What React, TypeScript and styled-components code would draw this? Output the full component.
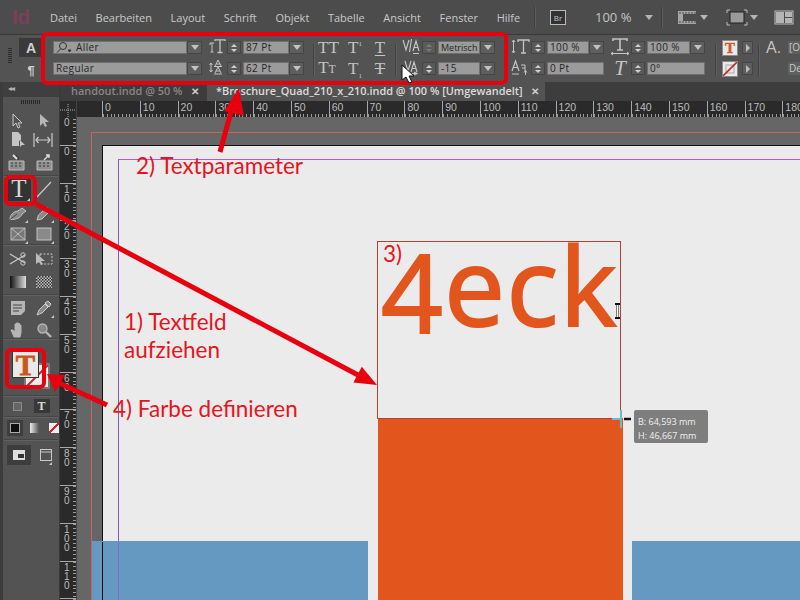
import React from 'react';
import styled, { createGlobalStyle } from 'styled-components';

const Global = createGlobalStyle`
  html, body { margin: 0; padding: 0; width: 800px; height: 600px; overflow: hidden; background: #535353; }
  * { box-sizing: border-box; }
`;

const Screen = styled.div`
  position: relative; width: 800px; height: 600px; overflow: hidden;
  display: flex; flex-direction: column;
  font-family: "Open Sans", sans-serif; background: #4f4f4f;
`;

/* ---------- menu bar ---------- */
const MenuBar = styled.div`
  height: 34px; flex: none; display: flex; align-items: center; background: #4c4c4c; color: #c9c9c9;
  font-size: 11px; overflow: hidden;
`;
const Logo = styled.div`
  width: 50px; padding-left: 12px; font-family: "Liberation Sans", sans-serif; font-weight: 700; font-size: 21px;
  color: #7b3f58; letter-spacing: -0.5px;
`;
const MenuItems = styled.div`display: flex; gap: 18.6px; width: 484px;`;
const MenuItem = styled.span`white-space: nowrap;`;
const MenuDivider = styled.div<{ $ml?: number }>`
  width: 1px; height: 20px; background: #3d3d3d; box-shadow: 1px 0 0 #5e5e5e; flex: none; margin-left: ${p => p.$ml ?? 0}px;
`;
const BrBox = styled.div`
  width: 16px; height: 15px; margin-left: 15px; border: 1px solid #bbb; background: #333; color: #c8c8c8;
  font-size: 8px; display: flex; align-items: center; justify-content: center; flex: none;
`;
const Zoom = styled.div`width: 50px; margin-left: 29px; font-size: 13px; color: #c4c4c4; flex: none; white-space: nowrap;`;
const Caret = styled.div<{ $ml?: number }>`
  width: 0; height: 0; flex: none; margin-left: ${p => p.$ml ?? 2}px;
  border-left: 4px solid transparent; border-right: 4px solid transparent; border-top: 5px solid #b5b5b5;
`;
const MenuIcon = styled.svg<{ $ml: number }>`flex: none; margin-left: ${p => p.$ml}px; color: #bdbdbd;`;

/* ---------- control bar ---------- */
const ControlBar = styled.div`
  height: 48px; flex: none; display: flex; background: #535353; padding-top: 5px;
  border-top: 1px solid #393939; overflow: hidden;
`;
const Grip = styled.div`
  margin: 8px 0 0 8px; width: 4px; height: 15px; flex: none;
  background: repeating-linear-gradient(180deg, #2e2e2e 0 1px, transparent 1px 2px);
`;
const Col = styled.div<{ $ml: number; $w: number }>`
  margin-left: ${p => p.$ml}px; width: ${p => p.$w}px; flex: none; display: flex; flex-direction: column; gap: 6px;
`;
const Row = styled.div`height: 15px; display: flex; align-items: center; gap: 1px;`;
const VDivider = styled.div<{ $ml: number }>`
  margin: 4px 0 0 ${p => p.$ml}px; width: 1px; height: 32px; background: #424242; flex: none; box-shadow: 1px 0 0 #5f5f5f;
`;
const ModeBtn = styled.div<{ $on?: boolean }>`
  width: 24px; height: 19px; display: flex; align-items: center; justify-content: center; margin-top: -2px;
  font-family: "Liberation Sans", sans-serif; font-weight: 700; color: #d0d0d0; font-size: ${p => p.$on ? 14 : 13}px;
  background: ${p => p.$on ? '#3a3a3a' : 'transparent'};
`;
const Field = styled.div<{ $narrow?: boolean }>`
  flex: 1; min-width: 0; height: 13px; background: #9b9b9b; box-shadow: inset 0 0 0 1px #6f6f6f; color: #262626;
  font-size: ${p => p.$narrow ? 9 : 10}px; letter-spacing: ${p => p.$narrow ? 0 : 0.4}px; line-height: 13px; padding-left: 3px; display: flex; align-items: center; gap: 4px;
  white-space: nowrap; overflow: hidden;
`;
const Drop = styled.div`
  width: 15px; height: 13px; flex: none; background: #5e5e5e; display: flex; align-items: center; justify-content: center;
  margin-left: -1px; box-shadow: inset 0 0 0 1px #454545;
`;
const DropArrow = styled.div`
  width: 0; height: 0; border-left: 4px solid transparent; border-right: 4px solid transparent; border-top: 5px solid #c2c2c2;
`;
const SpinnerBox = styled.div<{ $dim?: boolean }>`
  width: 14px; height: 13px; flex: none; background: #5a5a5a; margin-right: 1px; display: flex; flex-direction: column;
  align-items: center; justify-content: center; gap: 2px; box-shadow: inset 0 0 0 1px #454545;
  --c: ${p => p.$dim ? '#7a7a7a' : '#cfcfcf'};
`;
const Up = styled.div`width:0;height:0;border-left:3px solid transparent;border-right:3px solid transparent;border-bottom:3px solid var(--c);`;
const Down = styled.div`width:0;height:0;border-left:3px solid transparent;border-right:3px solid transparent;border-top:3px solid var(--c);`;
const Glyph = styled.div<{ $w?: number; $size?: number; $italic?: boolean }>`
  width: ${p => p.$w ?? 18}px; flex: none; text-align: center; color: #c4c4c4; line-height: 15px;
  font-family: "Liberation Serif", serif; font-size: ${p => p.$size ?? 17}px; white-space: nowrap;
  font-style: ${p => p.$italic ? 'italic' : 'normal'};
`;
const Sup = styled.span`font-size: 7px; vertical-align: super; line-height: 0;`;
const Sub = styled.span`font-size: 7px; vertical-align: sub; line-height: 0;`;
const SmallCap = styled.span`font-size: 12px;`;
const Under = styled.span`text-decoration: underline; text-underline-offset: 2px;`;
const Strike = styled.span`text-decoration: line-through;`;
const CaseRow = styled.div`height: 15px; display: flex; align-items: center; gap: 10px;`;
const ColorChip = styled.div`
  width: 16px; height: 16px; flex: none; background: #e9e9e9; border: 1px solid #8a8a8a;
  display: flex; align-items: center; justify-content: center; color: #d9541e;
  font-family: "Liberation Serif", serif; font-weight: 700; font-size: 15px; line-height: 14px;
  margin-right: 3px; -webkit-text-stroke: 0.4px #d9541e;
`;
const ArrowBtn = styled.div`
  width: 11px; height: 13px; flex: none; background: #5e5e5e; display: flex; align-items: center; justify-content: center;
  box-shadow: inset 0 0 0 1px #454545;
`;
const RightTri = styled.div`
  width:0;height:0;border-top:4px solid transparent;border-bottom:4px solid transparent;border-left:4px solid #bdbdbd;
`;
const StyleA = styled.div`
  font-family: "Liberation Sans", sans-serif; font-size: 16px; color: #c2c2c2; width: 21px; flex: none; line-height: 15px;
`;
const StubField = styled.div`
  width: 16px; height: 13px; flex: none; background: #5f5f5f; color: #c8c8c8; font-size: 10px; line-height: 13px; padding-left: 1px; white-space: nowrap;
`;

/* ---------- lower part ---------- */
const Lower = styled.div`flex: 1; display: flex; min-height: 0;`;
const Toolbox = styled.div`
  width: 60px; flex: none; background: #535353; border-left: 3px solid #3c3c3c; border-right: 1px solid #3a3a3a;
  display: flex; flex-direction: column; align-items: stretch;
`;
const ToolHead = styled.div`
  height: 15px; flex: none; background: #3f3f3f; color: #b5b5b5; font-size: 8px; line-height: 14px; padding-left: 5px; letter-spacing: -1px;
  font-family: "DejaVu Sans", sans-serif;
`;
const ToolGrip = styled.div`
  height: 4px; width: 20px; margin: 3px auto 7px; flex: none;
  background: repeating-linear-gradient(90deg, #272727 0 1px, transparent 1px 2px);
`;
const ToolRow = styled.div<{ $h: number; $pb?: number }>`
  height: ${p => p.$h}px; padding: 0 4px ${p => p.$pb ?? 0}px 4px; display: flex; align-items: center; justify-content: space-between; flex: none;
`;
const ToolSep = styled.div`height: 1px; background: #454545; box-shadow: 0 1px 0 #626262; flex: none; margin: 0 1px;`;
const Tool = styled.div<{ $w?: number }>`
  width: ${p => p.$w ?? 22}px; height: 20px; flex: none; display: flex; align-items: center; justify-content: center;
  color: #c9c9c9; font-family: "Liberation Serif", serif; position: relative;
`;
const Fly = styled.div`
  position: absolute; right: 1px; bottom: 0; width: 0; height: 0;
  border-left: 3px solid transparent; border-bottom: 3px solid #c9c9c9;
`;
const TypeTool = styled(Tool)`background: #333; font-size: 25px; line-height: 22px; color: #d8d8d8; height: 23px; width: 24px;`;
const FillStack = styled.div`position: relative; height: 56px; flex: none;`;
const StrokeSwatch = styled.div`
  position: absolute; left: 21px; top: 24px; width: 26px; height: 26px; background: #eeeeee; border: 2px solid #7a7a7a;
  overflow: hidden;
`;
const FillSwatch = styled.div`
  position: absolute; left: 9px; top: 12px; width: 27px; height: 27px; background: #e9e9e9; border: 1px solid #333;
  color: #c9581f; font-family: "Liberation Serif", serif; font-weight: 700; font-size: 29px; line-height: 26px; text-align: center;
  -webkit-text-stroke: 0.8px #c9581f;
`;
const SmallRow = styled.div`height: 20px; flex: none; display: flex; align-items: center; justify-content: center; gap: 12px;`;
const HollowBtn = styled.div`width: 9px; height: 9px; border: 1px solid #8a8a8a; background: #666;`;
const TextBtn = styled.div`
  width: 16px; height: 14px; background: #383838; color: #ddd; text-align: center; line-height: 14px; font-size: 12px;
  font-family: "Liberation Serif", serif; font-weight: 700;
`;
const ColorRow = styled.div`height: 22px; flex: none; display: flex; align-items: center; gap: 7px; padding-left: 7px;`;
const BlackBtn = styled.div`width: 10px; height: 10px; background: #0e0e0e; border: 1px solid #aaa; outline: 3px solid #3e3e3e;`;
const GradBtn = styled.div`width: 9px; height: 10px; margin-left: 3px; background: linear-gradient(90deg, #eee, #555);`;
const NoneBtn = styled.div`
  width: 10px; height: 10px; margin-left: 3px; background: linear-gradient(135deg, #eee 42%, #c9262c 42% 58%, #eee 58%);
`;
const ViewRow = styled.div`height: 29px; flex: none; display: flex; align-items: center; gap: 8px; padding-left: 4px;`;
const ViewBtn = styled.div`width: 24px; height: 20px; background: #3d3d3d; display: flex; align-items: center; justify-content: center; color: #d5d5d5;`;

const Main = styled.div`flex: 1; min-width: 0; display: flex; flex-direction: column;`;
const TabBar = styled.div`height: 19px; flex: none; display: flex; background: #3d3d3d; font-size: 10.9px; line-height: 18px;`;
const DimTab = styled.div`
  width: 147px; padding-left: 11px; color: #888; display: flex; font-weight: 600; white-space: nowrap; flex: none;
`;
const ActiveTab = styled.div`
  width: 338px; padding-left: 9px; color: #dcdcdc; background: #535353; display: flex; font-weight: 600; white-space: nowrap; flex: none;
`;
const TabClose = styled.span<{ $ml: number }>`margin-left: ${p => p.$ml}px; color: #cfcfcf; font-size: 10px;`;

const RulerTop = styled.div`height: 16px; flex: none; display: flex; background: #2a2a2a;`;
const Corner = styled.div`width: 17px; flex: none; color: #a5a5a5; border-right: 1px solid #444;`;
const HRuler = styled.div`flex: 1; overflow: hidden; display: flex; padding-left: 25px; min-width: 0;`;
const HCell = styled.div`
  width: 37.8px; flex: none; height: 16px; border-left: 1px solid #a8a8a8; padding-left: 2px;
  font-size: 10.5px; line-height: 12px; color: #bdbdbd; font-family: "Liberation Sans", sans-serif;
  background: repeating-linear-gradient(90deg, #9a9a9a 0 1px, transparent 1px 3.78px) left bottom / 100% 3px no-repeat;
`;
const Body = styled.div`flex: 1; min-height: 0; display: flex;`;
const VRuler = styled.div`
  width: 17px; flex: none; background: #2a2a2a; overflow: hidden; display: flex; flex-direction: column; border-right: 1px solid #444;
`;
const VCell = styled.div<{ $first?: boolean }>`
  height: 37.8px; flex: none; border-top: 1px solid #a8a8a8; padding: 1px 0 0 4px; margin-top: ${p => p.$first ? -10 : 0}px;
  display: flex; flex-direction: column; font-size: 10px; line-height: 9px; color: #bdbdbd; font-family: "Liberation Sans", sans-serif;
  background: repeating-linear-gradient(180deg, #9a9a9a 0 1px, transparent 1px 3.78px) right top / 3px 100% no-repeat;
`;

/* ---------- document canvas ---------- */
const Canvas = styled.div`
  flex: 1; min-width: 0; background: #666666; padding: 15px 0 0 14px; display: flex; overflow: hidden;
`;
const Bleed = styled.div`
  flex: 1; border-left: 1px solid #c0675f; border-top: 1px solid #c0675f; padding: 12px 0 0 10px; display: flex; position: relative;
`;
const Sheet = styled.div`
  flex: 1; background: #ebebeb; border-left: 1px solid #111; border-top: 1px solid #111;
  padding: 13px 0 0 15px; display: flex;
`;
const MarginGuide = styled.div`
  flex: 1; border-left: 1px solid #7f5cc4; border-top: 1px solid #b060c4;
`;
/* objects placed on the document, coordinates relative to the bleed box */
const Block = styled.div<{ $x: number; $y: number; $w: number; $h: number; $c: string }>`
  position: absolute; left: ${p => p.$x}px; top: ${p => p.$y}px; width: ${p => p.$w}px; height: ${p => p.$h}px; background: ${p => p.$c};
`;
const GuideOver = styled.div`position: absolute; left: 26px; top: 409px; width: 1px; height: 60px; background: #7f6cc8;`;
const BlackOver = styled.div`position: absolute; left: 10px; top: 409px; width: 1px; height: 60px; background: #111;`;
const TextFrame = styled.div`
  position: absolute; left: 285px; top: 108px; width: 244px; height: 178px; border: 1px solid #b5402f;
  color: #e2561e; font-family: "Open Sans", sans-serif; font-size: 108px; line-height: 86px; padding-left: 3px; letter-spacing: 1.5px; white-space: nowrap;
  -webkit-text-stroke: 2px #e2561e; overflow: hidden;
`;
const OldStyleFour = styled.span`vertical-align: -7px;`;
const SizeTip = styled.div`
  position: absolute; left: 634px; top: 410px; width: 74px; height: 33px; background: #7e7e7e; border-radius: 2px; padding: 5px 0 0 4px;
  color: #f0f0f0; font-family: "Open Sans", sans-serif; font-size: 9px; line-height: 14px; white-space: nowrap;
`;

/* ---------- annotations ---------- */
const Overlay = styled.svg`position: absolute; inset: 0; pointer-events: none;`;
const Highlight = styled.div<{ $x: number; $y: number; $w: number; $h: number; $b?: number }>`
  position: absolute; left: ${p => p.$x}px; top: ${p => p.$y}px; width: ${p => p.$w}px; height: ${p => p.$h}px;
  border: ${p => p.$b ?? 4}px solid #e8000e; border-radius: 6px;
`;
const Note = styled.div<{ $x: number; $y: number; $s?: number }>`
  position: absolute; left: ${p => p.$x}px; top: ${p => p.$y}px; color: #e6141c; font-family: Lato, sans-serif;
  font-size: ${p => p.$s ?? 22.5}px; line-height: 28px; white-space: nowrap;
`;

const Spinner = ({ dim }: { dim?: boolean }) => <SpinnerBox $dim={dim}><Up /><Down /></SpinnerBox>;
const Dropdown = () => <Drop><DropArrow /></Drop>;

const Ico = ({ w = 20, h = 18, children }: { w?: number; h?: number; children: React.ReactNode }) => (
  <svg width={w} height={h} viewBox={`0 0 ${w} ${h}`} fill="none" stroke="currentColor" strokeWidth="1">{children}</svg>
);

const menu = ['Datei', 'Bearbeiten', 'Layout', 'Schrift', 'Objekt', 'Tabelle', 'Ansicht', 'Fenster', 'Hilfe'];
const hLabels = Array.from({ length: 19 }, (_, i) => i * 10);
const vLabels = [10, 0, 10, 20, 30, 40, 50, 60, 70, 80, 90, 100, 110, 120];

export default function App() {
  return (
    <Screen>
      <Global />
      <MenuBar>
        <Logo>Id</Logo>
        <MenuItems>{menu.map(m => <MenuItem key={m}>{m}</MenuItem>)}</MenuItems>
        <MenuDivider />
        <BrBox>Br</BrBox>
        <Zoom>100 %</Zoom>
        <Caret $ml={0} />
        <MenuDivider $ml={8} />
        <MenuIcon $ml={16} width="18" height="15" viewBox="0 0 18 15">
          <rect x="0" y="1" width="18" height="13" fill="#a5a5a5" />
          <rect x="5" y="4" width="13" height="7" fill="#4c4c4c" />
          <path d="M1 3h17M1 12h17" stroke="#4c4c4c" strokeDasharray="2 1" />
        </MenuIcon>
        <Caret $ml={4} />
        <MenuIcon $ml={18} width="22" height="17" viewBox="0 0 22 17">
          <path d="M1 4V1h3M18 1h3v3M21 13v3h-3M4 16H1v-3" fill="none" stroke="#bbb" />
          <rect x="4" y="3" width="14" height="11" fill="#9a9a9a" stroke="#222" />
        </MenuIcon>
        <Caret $ml={2} />
        <MenuIcon $ml={16} width="20" height="15" viewBox="0 0 20 15">
          <rect x="1" y="1" width="18" height="13" fill="#4c4c4c" stroke="#bbb" />
          <rect x="2" y="2" width="8" height="11" fill="#b5b5b5" />
          <rect x="11" y="2" width="7" height="5" fill="#b5b5b5" />
          <rect x="11" y="8" width="7" height="5" fill="#b5b5b5" />
        </MenuIcon>
      </MenuBar>

      <ControlBar>
        <Grip />
        <Col $ml={7} $w={24}>
          <ModeBtn $on>A</ModeBtn>
          <ModeBtn>¶</ModeBtn>
        </Col>
        <Col $ml={10} $w={149}>
          <Row>
            <Field>
              <svg width="16" height="11" viewBox="0 0 16 11" fill="none" stroke="#333"><circle cx="7" cy="4" r="3.5" /><path d="M4.5 7L1 10.5" /><path d="M12 8h3l-1.5 2z" fill="#333" /></svg>
              Aller
            </Field>
            <Dropdown />
          </Row>
          <Row><Field>Regular</Field><Dropdown /></Row>
        </Col>
        <Col $ml={6} $w={96}>
          <Row>
            <Glyph><svg width="17" height="15" viewBox="0 0 17 15" fill="none" stroke="#c4c4c4"><path d="M1 6V4h4M3 4v9M1.5 13h3" /><path d="M6 2V0.8h10V2M11 1v12.5M8.5 13.5h5" strokeWidth="1.3" /></svg></Glyph>
            <Spinner /><Field>87 Pt</Field><Dropdown />
          </Row>
          <Row>
            <Glyph><svg width="17" height="17" viewBox="0 0 17 17" fill="none" stroke="#c4c4c4"><path d="M2 4v9M0.5 6L2 4l1.5 2M0.5 11L2 13l1.5-2" /><path d="M6 7l3-6 3 6M7 5h4M6 14l3-6 3 6M7 12h4M5 7.5h8M5 15h8" /></svg></Glyph>
            <Spinner /><Field>62 Pt</Field><Dropdown />
          </Row>
        </Col>
        <VDivider $ml={9} />
        <Col $ml={4} $w={72}>
          <CaseRow><Glyph $w={18}>TT</Glyph><Glyph $w={18}>T<Sup>1</Sup></Glyph><Glyph $w={12}><Under>T</Under></Glyph></CaseRow>
          <CaseRow><Glyph $w={18}>T<SmallCap>T</SmallCap></Glyph><Glyph $w={18}>T<Sub>1</Sub></Glyph><Glyph $w={12}><Strike>T</Strike></Glyph></CaseRow>
        </Col>
        <VDivider $ml={5} />
        <Col $ml={5} $w={94}>
          <Row>
            <Glyph $w={20}><svg width="19" height="17" viewBox="0 0 19 17" fill="none" stroke="#c4c4c4" strokeWidth="1.2"><path d="M1 2l3 10 3-10M11 13l3-10 3 10M12 9.5h4M9.5 1l-2 13M11 15.5h6" /></svg></Glyph>
            <Spinner dim /><Field $narrow>Metrisch</Field><Dropdown />
          </Row>
          <Row>
            <Glyph $w={20}><svg width="19" height="17" viewBox="0 0 19 17" fill="none" stroke="#c4c4c4" strokeWidth="1.2"><path d="M3 2l3 10 3-10M9 13l3-10 3 10M10 9.5h4M5 14.5h10M12 13l3 1.5-3 1.5" /></svg></Glyph>
            <Spinner /><Field>-15</Field><Dropdown />
          </Row>
        </Col>
        <VDivider $ml={10} />
        <Col $ml={4} $w={94}>
          <Row>
            <Glyph $w={20}><svg width="19" height="15" viewBox="0 0 19 15" fill="none" stroke="#c4c4c4"><path d="M2.5 1v13M1 3l1.5-2L4 3M1 12l1.5 2L4 12" /><path d="M7 3V1h11v2M12.5 1v13M10 14h5" strokeWidth="1.3" /></svg></Glyph>
            <Spinner /><Field>100 %</Field><Dropdown />
          </Row>
          <Row>
            <Glyph $w={20}><svg width="19" height="17" viewBox="0 0 19 17" fill="none" stroke="#c4c4c4"><path d="M1 12l3.5-10L8 12M2.5 8.5h4" strokeWidth="1.2" /><path d="M10 6h4v6M11 9h3M1 15h7M14.5 16v-4M13 13.5l1.5-2 1.5 2" /></svg></Glyph>
            <Spinner /><Field>0 Pt</Field>
          </Row>
        </Col>
        <Col $ml={6} $w={95}>
          <Row>
            <Glyph $w={20}><svg width="20" height="18" viewBox="0 0 20 18" fill="none" stroke="#c4c4c4"><path d="M3 3V1h14v2M10 1v11M7 12h6" strokeWidth="1.6" /><path d="M1 15.5h18M3 14l-2 1.5 2 1.5M17 14l2 1.5-2 1.5" /></svg></Glyph>
            <Spinner /><Field>100 %</Field><Dropdown />
          </Row>
          <Row>
            <Glyph $w={20} $size={21} $italic>T</Glyph>
            <Spinner /><Field>0°</Field>
          </Row>
        </Col>
        <VDivider $ml={10} />
        <Col $ml={6} $w={30}>
          <Row><ColorChip>T</ColorChip><ArrowBtn><RightTri /></ArrowBtn></Row>
          <Row>
            <ColorChip><svg width="14" height="14" viewBox="0 0 14 14"><rect x="3" y="3" width="8" height="8" fill="none" stroke="#aaa" /><path d="M0 14L14 0" stroke="#c22a2a" strokeWidth="1.6" /></svg></ColorChip>
            <ArrowBtn><RightTri /></ArrowBtn>
          </Row>
        </Col>
        <VDivider $ml={6} />
        <Col $ml={7} $w={37}>
          <Row><StyleA>A.</StyleA><StubField>[O</StubField></Row>
          <Row><StyleA /><StubField>De</StubField></Row>
        </Col>
      </ControlBar>

      <Lower>
        <Toolbox>
          <ToolHead>◂◂</ToolHead>
          <ToolGrip />
          <ToolRow $h={20}>
            <Tool><Ico w={14} h={16}><path d="M2 1v12l3-3 2 5 2-1-2-4h4z" /></Ico></Tool>
            <Tool><Ico w={14} h={16}><path d="M3 1v12l3-3 2 4 2-1-2-4h4z" fill="#b8b8b8" stroke="none" /></Ico></Tool>
          </ToolRow>
          <ToolRow $h={18}>
            <Tool><Ico w={16} h={18}><path d="M2 1h6l3 3v5l-2 1v5H2z" fill="#c4c4c4" stroke="none" /><path d="M10 9v7l2-2h3z" fill="#c4c4c4" stroke="none" /></Ico></Tool>
            <Tool $w={24}><Ico w={22} h={16}><path d="M2 1v14M20 1v14M4 8h14M6.5 5L4 8l2.5 3M15.5 5L18 8l-2.5 3" strokeWidth="1.2" /></Ico></Tool>
          </ToolRow>
          <ToolRow $h={26}>
            <Tool $w={20}><Ico w={18} h={17}><path d="M1 7h15v9H1z" fill="#8f8f8f" stroke="#bbb" /><path d="M8 1l3 4H9.5M3 9h2M7 9h2M11 9h2M3 12h2M7 12h2M11 12h2" stroke="#333" /><path d="M5 1l4 4" stroke="#ddd" strokeWidth="2" /></Ico></Tool>
            <Tool $w={20}><Ico w={18} h={17}><path d="M1 7h15v9H1z" fill="#8f8f8f" stroke="#bbb" /><path d="M3 9h2M7 9h2M11 9h2M3 12h2M7 12h2M11 12h2" stroke="#333" /><path d="M8 6l5-5M10 1h3v3" stroke="#ddd" strokeWidth="1.4" /></Ico></Tool>
          </ToolRow>
          <ToolSep />
          <ToolRow $h={26}>
            <TypeTool>T<Fly /></TypeTool>
            <Tool><Ico w={16} h={18}><path d="M1 17L15 2" strokeWidth="1.2" /></Ico></Tool>
          </ToolRow>
          <ToolRow $h={22}>
            <Tool><Ico w={18} h={13}><path d="M1 12.5c0-4 3-8 8-8.500l4-3 4 3-4 3c-1 4-6 5.500-12 5.500z" fill="#8a8a8a" stroke="#c4c4c4" /><path d="M1 12.5L8 7" stroke="#444" /></Ico><Fly /></Tool>
            <Tool><Ico w={18} h={16}><path d="M2 15l1.500-5L12 2l3.500 3.500L7 14z" fill="#8a8a8a" stroke="#c4c4c4" /><path d="M11 3l3.500 3.500" stroke="#444" /></Ico><Fly /></Tool>
          </ToolRow>
          <ToolRow $h={20}>
            <Tool><Ico w={16} h={14}><rect x="1" y="1" width="14" height="12" fill="#777" stroke="#bbb" /><path d="M1 1l14 12M15 1L1 13" stroke="#bbb" /></Ico><Fly /></Tool>
            <Tool><Ico w={16} h={14}><rect x="1" y="1" width="14" height="12" fill="#8a8a8a" stroke="#c4c4c4" /></Ico><Fly /></Tool>
          </ToolRow>
          <ToolSep />
          <ToolRow $h={28}>
            <Tool><Ico w={18} h={14}><path d="M1 2l15 9M1 12L16 3" strokeWidth="1.2" /><circle cx="14" cy="3" r="2.2" /><circle cx="14" cy="11" r="2.2" /></Ico></Tool>
            <Tool><Ico w={18} h={14}><rect x="5" y="2" width="12" height="10" strokeDasharray="2 1.5" /><path d="M1 1v11l3-2 2 3 2-1-2-3h4z" fill="#bbb" stroke="none" /></Ico></Tool>
          </ToolRow>
          <ToolRow $h={21} $pb={4}>
            <Tool><svg width="16" height="12" viewBox="0 0 16 12"><defs><linearGradient id="g1"><stop offset="0" stopColor="#111" /><stop offset="1" stopColor="#ddd" /></linearGradient></defs><rect width="16" height="12" fill="url(#g1)" /></svg></Tool>
            <Tool><svg width="16" height="12" viewBox="0 0 16 12"><defs><pattern id="ck" width="3" height="3" patternUnits="userSpaceOnUse"><rect width="3" height="3" fill="#bbb" /><rect width="1.5" height="1.5" fill="#333" /><rect x="1.5" y="1.5" width="1.5" height="1.5" fill="#444" /></pattern></defs><rect width="16" height="12" fill="url(#ck)" /></svg></Tool>
          </ToolRow>
          <ToolSep />
          <ToolRow $h={26}>
            <Tool><Ico w={14} h={14}><path d="M0 0h14v10l-4 4H0z" fill="#b5b5b5" stroke="none" /><path d="M2 4h9M2 7h9M2 10h6" stroke="#444" /></Ico></Tool>
            <Tool><Ico w={16} h={16}><path d="M1 15l2-5 6-6 3 3-6 6zM9 3l3-2 3 3-2 3z" fill="#888" stroke="#ccc" /></Ico><Fly /></Tool>
          </ToolRow>
          <ToolRow $h={17}>
            <Tool><Ico w={16} h={16}><path d="M4 15L1 8h2l2 2V2h1.500v6V1h1.500v7V1.500h1.500V8V3h1.500v8l-1 4z" fill="#b5b5b5" stroke="#b5b5b5" /></Ico></Tool>
            <Tool><Ico w={16} h={16}><circle cx="6.5" cy="6.5" r="4.5" fill="#888" stroke="#b5b5b5" strokeWidth="1.4" /><path d="M10 10l5 5" strokeWidth="2.4" stroke="#b5b5b5" /></Ico></Tool>
          </ToolRow>
          <ToolSep />
          <FillStack>
            <StrokeSwatch><svg width="22" height="22" viewBox="0 0 22 22"><path d="M0 22L22 0" stroke="#c22a2a" strokeWidth="2" /></svg></StrokeSwatch>
            <FillSwatch>T</FillSwatch>
          </FillStack>
          <ToolSep />
          <SmallRow><HollowBtn /><TextBtn>T</TextBtn></SmallRow>
          <ToolSep />
          <ColorRow><BlackBtn /><GradBtn /><NoneBtn /></ColorRow>
          <ToolSep />
          <ViewRow>
            <ViewBtn><svg width="12" height="10" viewBox="0 0 12 10"><rect width="12" height="10" fill="#ddd" /><rect x="5" y="4" width="6" height="4" fill="#333" /></svg></ViewBtn>
            <Tool $w={14}><Ico w={12} h={12}><rect x="0.5" y="0.5" width="11" height="11" /><path d="M0.5 3h11" /></Ico><Fly /></Tool>
          </ViewRow>
        </Toolbox>

        <Main>
          <TabBar>
            <DimTab>handout.indd @ 50 %<TabClose $ml={9}>✕</TabClose></DimTab>
            <ActiveTab>*Broschure_Quad_210_x_210.indd @ 100 % [Umgewandelt]<TabClose $ml={8}>✕</TabClose></ActiveTab>
          </TabBar>
          <RulerTop>
            <Corner><svg width="17" height="16" viewBox="0 0 17 16" fill="none" stroke="#aaa" strokeDasharray="1 1"><path d="M0 8h15M8 2v13" /></svg></Corner>
            <HRuler>{hLabels.map(n => <HCell key={n}>{n}</HCell>)}</HRuler>
          </RulerTop>
          <Body>
            <VRuler>
              {vLabels.map((n, i) => (
                <VCell key={i} $first={i === 0}>{String(n).split('').map((d, j) => <span key={j}>{d}</span>)}</VCell>
              ))}
            </VRuler>
            <Canvas>
              <Bleed>
                <Sheet><MarginGuide /></Sheet>
                <Block $x={0} $y={408} $w={276} $h={60} $c="#6699c2" />
                <Block $x={540} $y={408} $w={180} $h={60} $c="#6699c2" />
                <BlackOver />
                <GuideOver />
                <Block $x={286} $y={285} $w={245} $h={190} $c="#e2561e" />
                <TextFrame><OldStyleFour>4</OldStyleFour>eck</TextFrame>
              </Bleed>
            </Canvas>
          </Body>
        </Main>
      </Lower>

      <SizeTip>B: 64,593 mm<br />H: 46,667 mm</SizeTip>

      <Highlight $x={41} $y={32} $w={467} $h={53} />
      <Highlight $x={4} $y={175} $w={33} $h={31} />
      <Highlight $x={5} $y={348} $w={41} $h={41} />

      <Overlay width="800" height="600" viewBox="0 0 800 600">
        <g fill="#e8000e" stroke="#e8000e" strokeWidth="5">
          <line x1="220" y1="152" x2="231" y2="112" />
          <line x1="36" y1="204" x2="358" y2="375" />
          <line x1="57" y1="382" x2="107" y2="405" />
        </g>
        <g fill="#e8000e" stroke="none">
          <polygon points="239,88 224,111 244,116" />
          <polygon points="377,385 353.4,382.6 361.8,366.8" />
          <polygon points="47,374 65,375 55,392" />
        </g>
        <path d="M402 65v15l4-3 3 6 3-1-3-6h5z" fill="#fff" stroke="#111" />
        <path d="M615 304h5M615 318h5M617.5 304v14" stroke="#111" strokeWidth="2" fill="none" />
        <path d="M617.5 305v12" stroke="#fff" fill="none" />
        <path d="M612 419h9M621 410v18" stroke="#6fb6cf" strokeWidth="2" fill="none" />
        <path d="M624 419h7" stroke="#111" strokeWidth="2.5" fill="none" />
      </Overlay>

      <Note $x={136} $y={152}>2) Textparameter</Note>
      <Note $x={124} $y={308}>1) Textfeld<br />aufziehen</Note>
      <Note $x={113} $y={395}>4) Farbe definieren</Note>
      <Note $x={383} $y={240}>3)</Note>
    </Screen>
  );
}
